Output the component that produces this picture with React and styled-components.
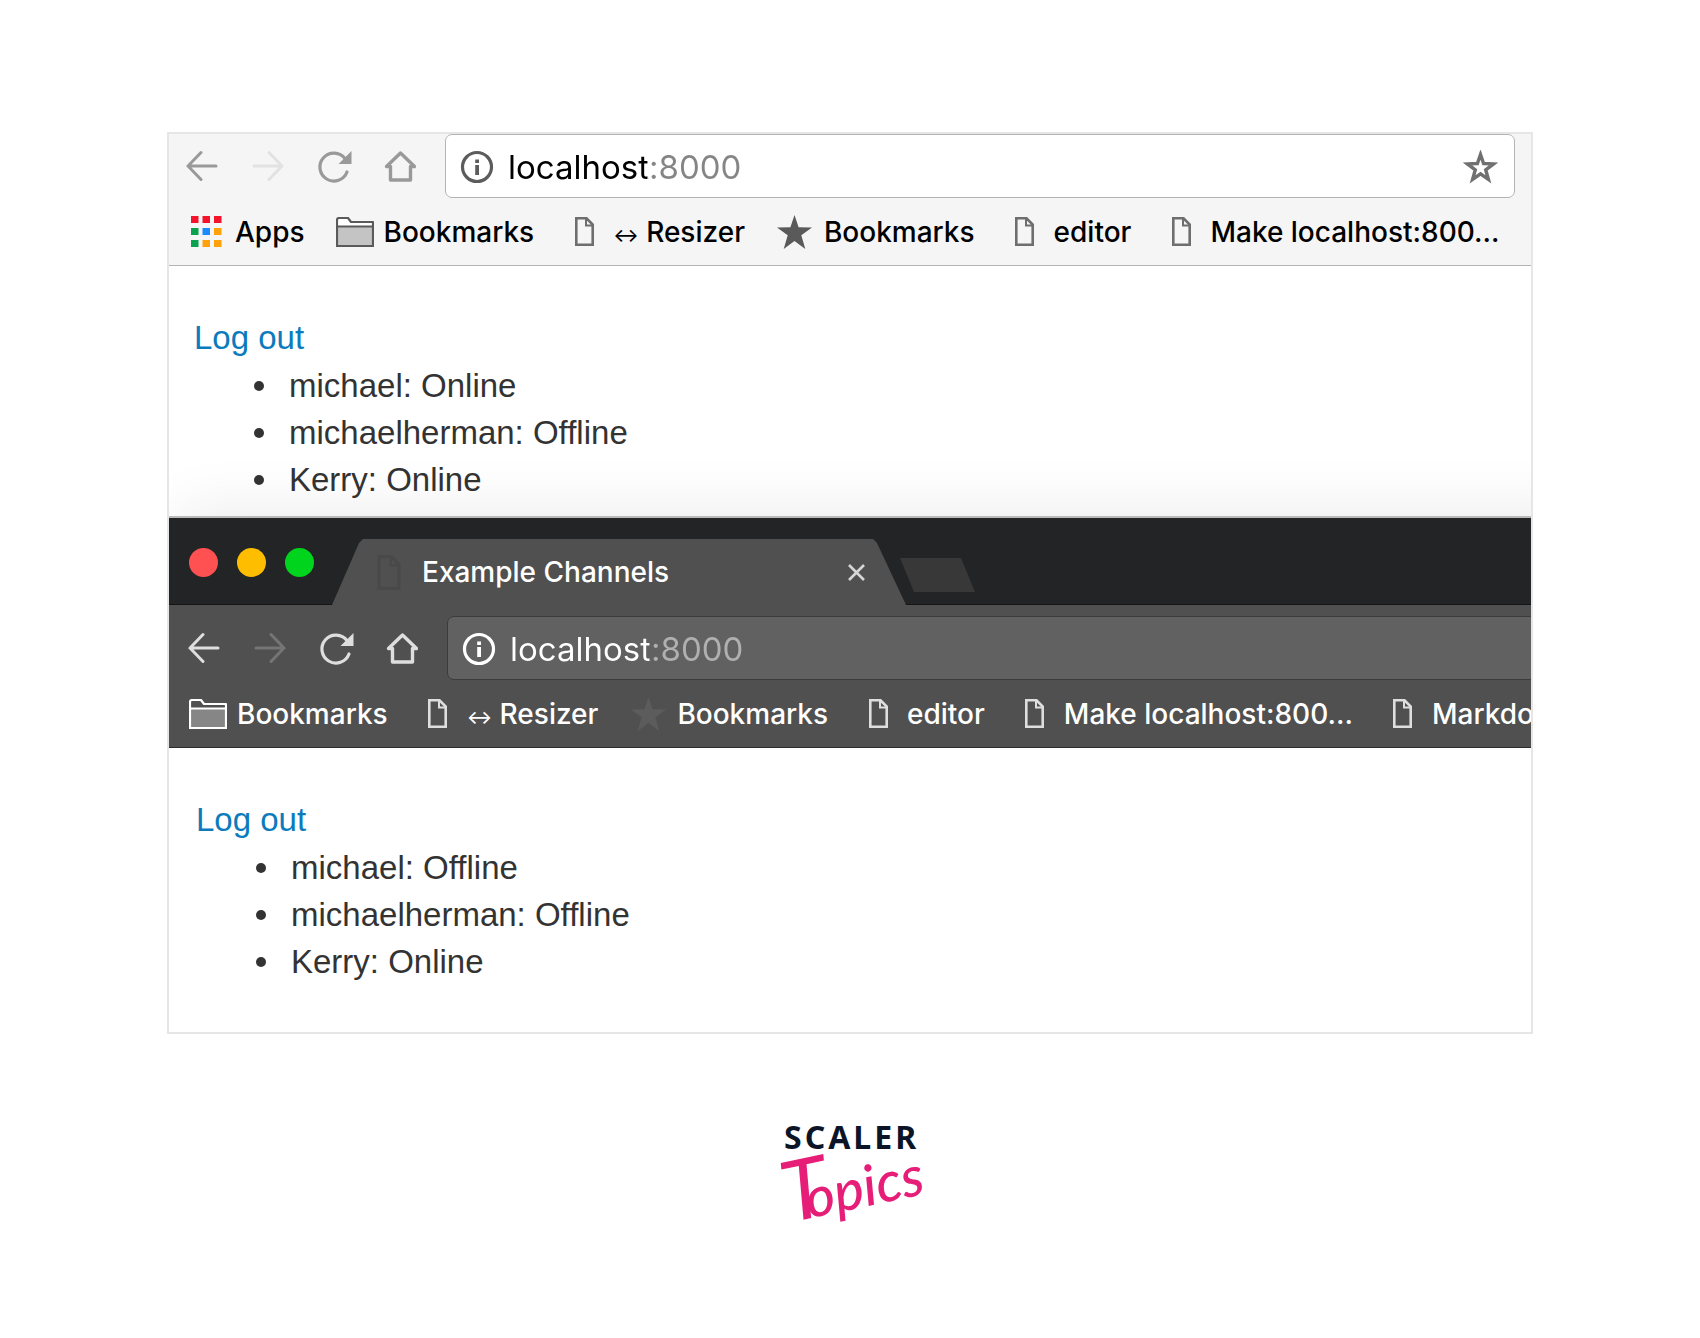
import React from "react";
import styled, { createGlobalStyle, ThemeProvider } from "styled-components";

const GlobalStyle = createGlobalStyle`
  *, *::before, *::after { box-sizing: border-box; }
  body { margin: 0; background: #fff; }
  button { padding: 0; border: 0; background: none; font: inherit; color: inherit; cursor: pointer; }
`;

const UI_FONT = `Inter, Roboto, "Liberation Sans", sans-serif`;

const light = {
  bar: "#f5f5f5",
  edge: "#b4b4b4",
  icon: "#999",
  iconOff: "#e2e2e2",
  field: "#fff",
  fieldEdge: "#b4b4b4",
  info: "#5c5c5c",
  host: "#000",
  port: "#858585",
  label: "#000",
  file: "#6e6e6e",
  folder: "#5a5a5a",
  folderBack: "#fff",
  folderFill: "#c4c4c4",
  star: "#5a5a5a",
};

const dark = {
  bar: "#505050",
  edge: "#2c2c2c",
  icon: "#dedede",
  iconOff: "#757575",
  field: "#616161",
  fieldEdge: "#3c3c3c",
  info: "#fff",
  host: "#fff",
  port: "#b0b0b0",
  label: "#fff",
  file: "#dedede",
  folder: "#fff",
  folderBack: "#505050",
  folderFill: "#868686",
  star: "#5c5c5c",
};

const Page = styled.main`
  display: flex;
  flex-direction: column;
  align-items: center;
  padding: 132px 167px 88px;
`;

const Frame = styled.div`
  width: 100%;
  overflow: hidden;
  border: 2px solid #e6e6e6;
`;

const FrontWindow = styled.section`
  position: relative;
  background: #fff;
  box-shadow: 0 -2px 0 #bababa, 30px 12px 56px 20px rgba(0, 0, 0, 0.08);
`;

const TitleStrip = styled.header`
  display: flex;
  align-items: flex-end;
  height: 87px;
  padding-left: 20px;
  background: #222425;
  border-bottom: 1px solid #141515;
`;

const Lights = styled.div`
  display: flex;
  gap: 19px;
  padding-bottom: 27px;
  margin-right: 18px;
`;

const Light = styled.button`
  width: 29px;
  height: 29px;
  && { background: ${(p) => p.$color}; }
  border-radius: 50%;
`;

const Tab = styled.div`
  display: flex;
  align-items: center;
  width: 574px;
  height: 66px;
  margin-bottom: -1px;
  padding: 0 41px 0 45px;
  background: #505050;
  clip-path: polygon(0 100%, 27px 4px, 31px 0, 541px 0, 545px 4px, 574px 100%);
`;

const TabTitle = styled.h1`
  flex: 1;
  margin: 0 0 0 21px;
  color: #fff;
  font: 500 28px/36px ${UI_FONT};
`;

const CloseButton = styled.button`
  display: flex;
`;

const NewTab = styled.button`
  width: 75px;
  height: 34px;
  margin: 0 0 12px -6px;
  && { background: #383838; }
  clip-path: polygon(0 0, 61px 0, 75px 100%, 14px 100%);
`;

const Chrome = styled.div`
  background: ${(p) => p.theme.bar};
  border-bottom: 1px solid ${(p) => p.theme.edge};
  padding-top: ${(p) => p.$top}px;
`;

const Toolbar = styled.nav`
  display: flex;
  align-items: center;
  gap: 34px;
  padding-left: ${(p) => p.$inset}px;
`;

const ToolButton = styled.button`
  display: flex;
  flex: none;
  color: ${(p) => (p.disabled ? p.theme.iconOff : p.theme.icon)};
`;

const AddressBox = styled.div`
  display: flex;
  flex: 1;
  align-items: center;
  gap: 15px;
  height: 64px;
  margin-left: -5px;
  margin-right: ${(p) => (p.$bleed ? -10 : 16)}px;
  padding: 1px 16px 0 15px;
  background: ${(p) => p.theme.field};
  border: 1px solid ${(p) => p.theme.fieldEdge};
  border-radius: 7px;
`;

const AddressButton = styled.button`
  display: flex;
  flex: none;
  color: ${(p) => p.theme.info};
`;

const AddressInput = styled.input`
  flex: 1;
  min-width: 0;
  padding: 0;
  border: 0;
  outline: 0;
  font: 400 33px/44px ${UI_FONT};
  color: transparent;
  caret-color: ${(p) => p.theme.host};
  background: linear-gradient(to right, ${(p) => p.theme.host} 139px, ${(p) => p.theme.port} 139px);
  background-clip: text;
  -webkit-background-clip: text;
`;

const BookmarkBar = styled.nav`
  display: flex;
  align-items: center;
  gap: 31px;
  height: 67px;
  padding-left: ${(p) => p.$inset}px;
  overflow: hidden;
`;

const Bookmark = styled.a`
  display: flex;
  flex: none;
  align-items: center;
  gap: 10px;
  color: ${(p) => p.theme.label};
  font: 500 28px/36px ${UI_FONT};
  text-decoration: none;
  white-space: nowrap;
`;

const Arrow = styled.span`
  font-size: 19px;
  line-height: 1;
`;

const IconSlot = styled.span`
  display: flex;
  justify-content: center;
  width: 38px;
`;

const Content = styled.div`
  padding: ${(p) => p.$pad};
  font: 400 33px/47px "Liberation Sans", Arial, sans-serif;
  color: #333;
`;

const LogOut = styled.a`
  color: #0b7bbd;
  line-height: 48px;
  text-decoration: none;
`;

const UserList = styled.ul`
  margin: 0;
  padding: 0 0 0 60px;
  list-style: none;
`;

const User = styled.li`
  display: flex;
  align-items: center;
  gap: 25px;

  &::before {
    content: "";
    width: 10px;
    height: 10px;
    border-radius: 50%;
    background: #333;
  }
`;

const LogoArt = styled.svg`
  display: block;
  margin-top: 80px;
  overflow: visible;
`;

const BackIcon = () => (
  <svg width="32" height="32" viewBox="0 0 32 32" fill="none" stroke="currentColor" strokeWidth="3" strokeLinecap="round" aria-hidden="true">
    <path d="M2 16H30M15 2.500L2 16L15 29.500" />
  </svg>
);

const ForwardIcon = () => (
  <svg width="32" height="32" viewBox="0 0 32 32" fill="none" stroke="currentColor" strokeWidth="3" strokeLinecap="round" aria-hidden="true">
    <path d="M2 16H30M17 2.500L30 16L17 29.500" />
  </svg>
);

const ReloadIcon = () => (
  <svg width="32" height="32" viewBox="0 0 32 32" fill="none" overflow="visible" aria-hidden="true">
    <path d="M27 8.500A14 14 0 1 0 29 22" stroke="currentColor" strokeWidth="3.200" strokeLinecap="round" />
    <path d="M33.500 1V14H20.500Z" fill="currentColor" />
  </svg>
);

const HomeIcon = () => (
  <svg width="32" height="32" viewBox="0 0 32 32" fill="none" stroke="currentColor" strokeWidth="3.400" strokeLinejoin="round" aria-hidden="true">
    <path d="M16.500 3L30.500 16.500H26.500V30H6.500V16.500H2.500Z" />
  </svg>
);

const InfoIcon = () => (
  <svg width="32" height="32" viewBox="0 0 32 32" overflow="visible" aria-hidden="true">
    <circle cx="16" cy="16" r="14.500" fill="none" stroke="currentColor" strokeWidth="3.200" />
    <path d="M14.200 8.500h3.800v3.600h-3.800zM14.200 14h3.800v10h-3.800z" fill="currentColor" />
  </svg>
);

const STAR = "M17.500 0L21.600 12.300L35 12.500L24.300 20.300L28.300 34L17.500 26L6.700 34L10.700 20.300L0 12.500L13.400 12.300Z";

const StarOutline = () => (
  <svg width="35" height="34" viewBox="0 0 35 34" aria-hidden="true">
    <path d="M17.500 4.500L20.600 13.500L30.500 13.900L22.700 19.800L25.400 29.400L17.500 23.900L9.600 29.400L12.300 19.800L4.500 13.900L14.400 13.500Z" fill="none" stroke="#707070" strokeWidth="3.400" />
  </svg>
);

const StarIcon = ({ color }) => (
  <svg width="35" height="34" viewBox="0 0 35 34" aria-hidden="true">
    <path d={STAR} fill={color} />
  </svg>
);

const FileIcon = ({ color, width = 19, height = 29 }) => (
  <svg width={width} height={height} viewBox="0 0 19 29" fill="none" stroke={color} aria-hidden="true">
    <path d="M1.300 1.300H11.500L17.700 7.500V27.700H1.300Z" strokeWidth="2.600" />
    <path d="M11 1V8.500H18" strokeWidth="2" />
  </svg>
);

const FolderIcon = ({ color, back, fill }) => (
  <svg width="38" height="30" viewBox="0 0 38 30" stroke={color} strokeWidth="2.200" strokeLinejoin="round" aria-hidden="true">
    <path d="M1 29V3Q1 1 3 1H12L15 5H37V29Z" fill={back} />
    <path d="M1 9.500H37V29H1Z" fill={fill} />
  </svg>
);

const APP_COLORS = ["#f4132b", "#f4132b", "#f4132b", "#0aa14f", "#1a8cff", "#ffa20a", "#0aa14f", "#ffa20a", "#ffa20a"];

const AppsIcon = () => (
  <svg width="31" height="31" viewBox="0 0 31 31" aria-hidden="true">
    {APP_COLORS.map((c, i) => (
      <rect key={i} x={(i % 3) * 11.5} y={Math.floor(i / 3) * 12} width="7.500" height="7" fill={c} />
    ))}
  </svg>
);

const CloseIcon = () => (
  <svg width="17" height="17" viewBox="0 0 17 17" stroke="#d6d6d6" strokeWidth="2.600" aria-hidden="true">
    <path d="M1 1L16 16M16 1L1 16" />
  </svg>
);

function BookmarkIcon({ kind, theme }) {
  if (kind === "apps") return <AppsIcon />;
  if (kind === "folder") return <FolderIcon color={theme.folder} back={theme.folderBack} fill={theme.folderFill} />;
  if (kind === "star") return <StarIcon color={theme.star} />;
  return <FileIcon color={theme.file} />;
}

const BOOKMARKS = [
  ["folder", "Bookmarks"],
  ["file", <><Arrow>↔</Arrow> Resizer</>],
  ["star", "Bookmarks"],
  ["file", "editor"],
  ["file", "Make localhost:800…"],
];

function BrowserChrome({ theme, top = 0, inset, bookmarks, bleed }) {
  return (
    <ThemeProvider theme={theme}>
      <Chrome $top={top}>
        <Toolbar $inset={inset} aria-label="Navigation">
          <ToolButton aria-label="Back"><BackIcon /></ToolButton>
          <ToolButton aria-label="Forward" disabled><ForwardIcon /></ToolButton>
          <ToolButton aria-label="Reload"><ReloadIcon /></ToolButton>
          <ToolButton aria-label="Home"><HomeIcon /></ToolButton>
          <AddressBox $bleed={bleed}>
            <AddressButton aria-label="Site information"><InfoIcon /></AddressButton>
            <AddressInput aria-label="Address" defaultValue="localhost:8000" spellCheck={false} />
            {!bleed && <AddressButton aria-label="Bookmark this page"><StarOutline /></AddressButton>}
          </AddressBox>
        </Toolbar>
        <BookmarkBar $inset={inset + 1} aria-label="Bookmarks">
          {bookmarks.map(([kind, label], i) => (
            <Bookmark key={i} href="#">
              <IconSlot><BookmarkIcon kind={kind} theme={theme} /></IconSlot>
              <span>{label}</span>
            </Bookmark>
          ))}
        </BookmarkBar>
      </Chrome>
    </ThemeProvider>
  );
}

function Users({ pad, users }) {
  return (
    <Content $pad={pad}>
      <LogOut href="#">Log out</LogOut>
      <UserList>
        {users.map(([name, status]) => (
          <User key={name}>{name}: {status}</User>
        ))}
      </UserList>
    </Content>
  );
}

export default function App() {
  return (
    <Page>
      <GlobalStyle />
      <Frame>
        <section>
          <BrowserChrome theme={light} inset={17} bookmarks={[["apps", "Apps"], ...BOOKMARKS]} />
          <Users
            pad="48px 25px 15px"
            users={[["michael", "Online"], ["michaelherman", "Offline"], ["Kerry", "Online"]]}
          />
        </section>
        <FrontWindow>
          <TitleStrip>
            <Lights>
              <Light $color="#ff5052" aria-label="Close window" />
              <Light $color="#ffbd00" aria-label="Minimize window" />
              <Light $color="#00d41c" aria-label="Zoom window" />
            </Lights>
            <Tab>
              <FileIcon color="#494949" width={24} height={35} />
              <TabTitle>Example Channels</TabTitle>
              <CloseButton aria-label="Close tab"><CloseIcon /></CloseButton>
            </Tab>
            <NewTab aria-label="New tab" />
          </TitleStrip>
          <BrowserChrome theme={dark} top={11} inset={19} bleed bookmarks={[...BOOKMARKS, ["file", "Markdown"]]} />
          <Users
            pad="48px 27px 47px"
            users={[["michael", "Offline"], ["michaelherman", "Offline"], ["Kerry", "Online"]]}
          />
        </FrontWindow>
      </Frame>
      <LogoArt width="150" height="136" viewBox="0 0 150 136" role="img" aria-label="Scaler Topics">
        <text x="9" y="35" fill="#0b1527" fontFamily="'Noto Sans', 'Open Sans', sans-serif" fontSize="32" fontWeight="700" letterSpacing="3">SCALER</text>
        <text transform="translate(13 109) rotate(-12)" fill="#e61e78" fontFamily="Lato, 'Open Sans', sans-serif" fontStyle="italic" fontWeight="400">
          <tspan fontSize="84">T</tspan>
          <tspan fontSize="56" fontWeight="500" dx="-24">opics</tspan>
        </text>
      </LogoArt>
    </Page>
  );
}
